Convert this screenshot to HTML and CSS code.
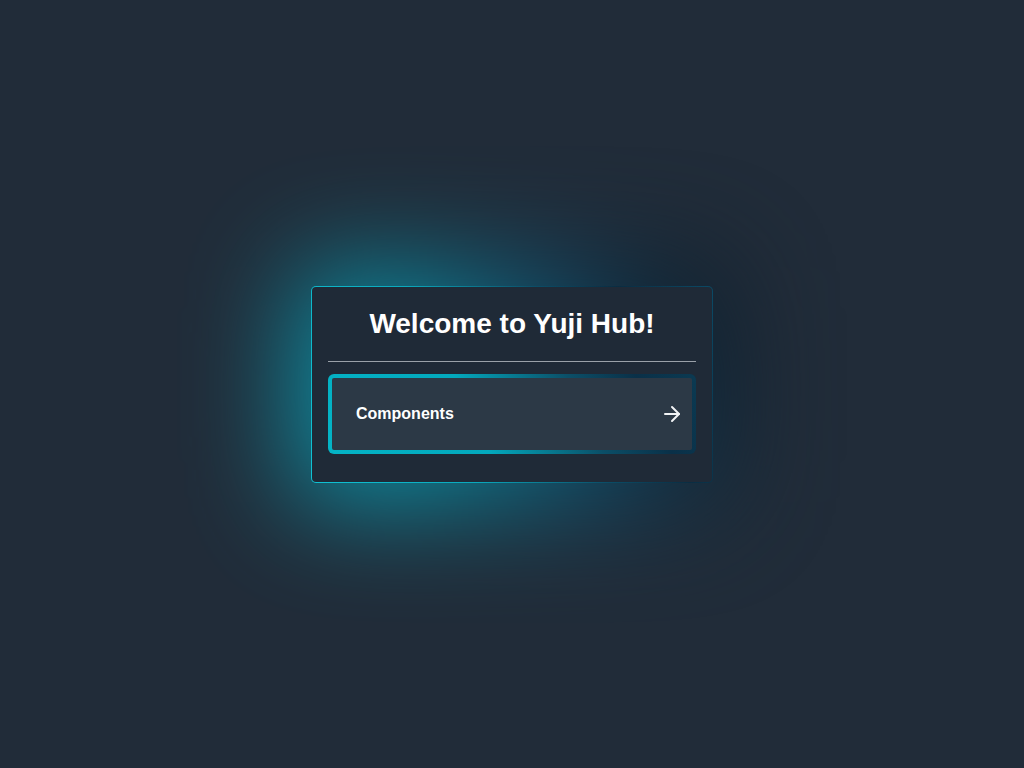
FILE: index.html
```html
<!DOCTYPE html>
<html lang="en">
<head>
<meta charset="utf-8">
<title>Yuji Hub</title>
<link rel="stylesheet" href="styles.css">
</head>
<body>
<main class="page">
  <section class="card">
    <h1 class="title">Welcome to Yuji Hub!</h1>
    <hr class="divider">
    <a class="link-btn" href="#">
      <span class="link-label">Components</span>
      <svg class="link-icon" viewBox="0 0 24 24" width="24" height="24" fill="none" stroke="currentColor" stroke-width="2" stroke-linecap="round" stroke-linejoin="round"><path d="M5 12h14"/><path d="m12 5 7 7-7 7"/></svg>
    </a>
  </section>
</main>
</body>
</html>
```
FILE: styles.css
```css
* { box-sizing: border-box; }
html, body { margin: 0; height: 100%; }
body {
  background: #212c39;
  font-family: "Liberation Sans", Arial, sans-serif;
  color: #ffffff;
}
.page {
  height: 100%;
  display: flex;
  align-items: center;
  justify-content: center;
}
.card {
  position: relative;
  width: 402px;
  padding: 19px 16px 28px;
  margin-top: 1px;
  border-radius: 5px;
  border: 1px solid transparent;
  background:
    linear-gradient(#1f2a37, #1f2a37) padding-box,
    linear-gradient(70deg, #10c2d4 0%, #0aa9bd 35%, #0b4e68 62%, #0a2d42 80%, #0b4a66 100%) border-box;
}
.card::before {
  content: "";
  position: absolute;
  inset: -20px -14px;
  z-index: -1;
  border-radius: 20px;
  background: linear-gradient(70deg, #07c0d6 0%, #0796ab 35%, #0d5577 60%, #081d2d 85%, #061420 100%);
  filter: blur(55px);
  opacity: 0.82;
}
.title {
  margin: 0 0 19px;
  font-size: 28px;
  line-height: 36px;
  font-weight: 700;
  text-align: center;
}
.divider {
  margin: 0 0 12px;
  border: 0;
  height: 1px;
  background: #9aa1a9;
}
.link-btn {
  display: flex;
  align-items: center;
  justify-content: space-between;
  height: 80px;
  padding: 0 8px 0 24px;
  border: 4px solid transparent;
  border-radius: 6px;
  background:
    linear-gradient(#2c3946, #2c3946) padding-box,
    linear-gradient(65deg, #04b4c6 0%, #03a9bd 40%, #0b4f68 68%, #0a3048 85%, #0b3a52 100%) border-box;
  color: #ffffff;
  text-decoration: none;
}
.link-label {
  font-size: 16px;
  font-weight: 700;
}
.link-icon {
  display: block;
  color: #f1f3f5;
}
```
